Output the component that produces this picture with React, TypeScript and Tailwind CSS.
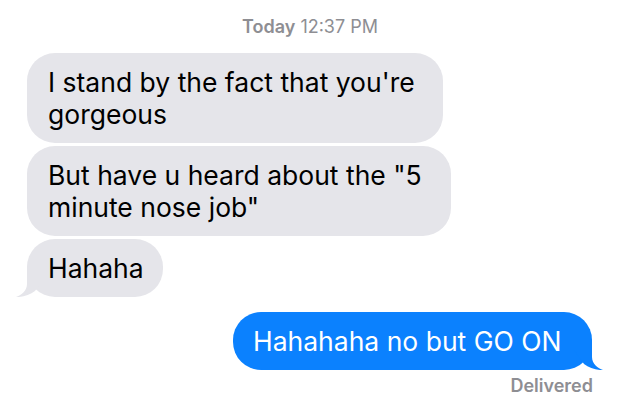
import React from "react";

const font = { fontFamily: "Inter, 'Liberation Sans', sans-serif" };

function LeftTail() {
  return (
    <svg
      className="absolute left-[-12px] bottom-0"
      width="32"
      height="30"
      viewBox="0 0 32 30"
    >
      <path
        d="M12 0 L12 17 C12 24 6 28.5 1 30 C8 30.5 15 27.5 20 24 L30 10 L30 0 Z"
        fill="#e5e5ea"
      />
    </svg>
  );
}

function RightTail() {
  return (
    <svg
      className="absolute right-[-12px] bottom-0 -scale-x-100"
      width="32"
      height="30"
      viewBox="0 0 32 30"
    >
      <path
        d="M12 0 L12 17 C12 24 6 28.5 1 30 C8 30.5 15 27.5 20 24 L30 10 L30 0 Z"
        fill="#0b81fe"
      />
    </svg>
  );
}

export default function App() {
  return (
    <div
      className="w-[620px] h-[406px] bg-white flex flex-col overflow-hidden"
      style={font}
    >
      <p className="pt-[17px] text-center text-[18px] leading-[20px] text-[#8e8e93]">
        <span className="font-semibold">Today</span> 12:37 PM
      </p>

      <div className="flex flex-col items-start gap-[3px] pl-[27px] mt-[16px] text-[26.5px] leading-[32px] text-black">
        <div className="w-[416px] rounded-[28px] bg-[#e5e5ea] pl-[21px] py-[13px] whitespace-nowrap">
          I stand by the fact that you're
          <br />
          gorgeous
        </div>
        <div className="w-[424px] rounded-[28px] bg-[#e5e5ea] pl-[21px] py-[13px] whitespace-nowrap">
          But have u heard about the "5
          <br />
          minute nose job"
        </div>
        <div className="relative w-[136px] rounded-[28px] bg-[#e5e5ea] pl-[21px] py-[13px] whitespace-nowrap">
          <LeftTail />
          <span className="relative">Hahaha</span>
        </div>
      </div>

      <div className="flex flex-col items-end pr-[28px] mt-[15px]">
        <div className="relative w-[359px] rounded-[28px] bg-[#0b81fe] pl-[20px] py-[13px] text-[26.5px] leading-[32px] text-white whitespace-nowrap">
          <RightTail />
          <span className="relative">Hahahaha no but GO ON</span>
        </div>
        <p className="mt-[6px] mr-[-1px] text-[18px] leading-[20px] font-semibold text-[#8e8e93]">
          Delivered
        </p>
      </div>
    </div>
  );
}
